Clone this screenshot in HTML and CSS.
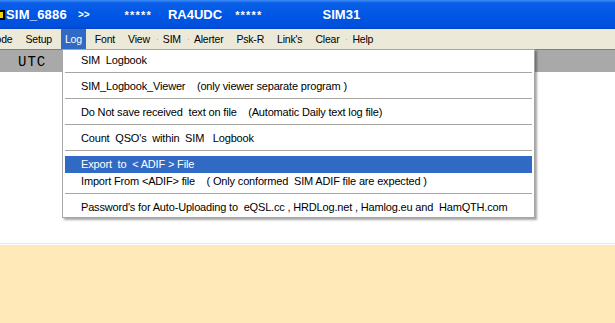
FILE: index.html
```html
<!DOCTYPE html>
<html lang="en">
<head>
    <meta charset="UTF-8">
    <title>SIM_6886</title>
    <link rel="stylesheet" href="styles.css">
</head>
<body>
    <div class="window">
        <div class="titlebar">
            <svg class="app-icon" width="5" height="10" viewBox="0 0 5 10">
                <rect x="0" y="0" width="5" height="10" fill="#000"/>
                <rect x="0" y="2" width="3" height="6" fill="#f2d200"/>
            </svg>
            <span class="title-name">SIM_6886</span>
            <span class="title-arrows">&gt;&gt;</span>
            <span class="title-stars first">*****</span>
            <span class="title-call">RA4UDC</span>
            <span class="title-stars second">*****</span>
            <span class="title-ver">SIM31</span>
        </div>

        <div class="menubar">
            <span class="menu-item first">Mode</span>
            <span class="menu-item">Setup</span>
            <span class="menu-item open">Log</span>
            <span class="menu-item">Font</span>
            <span class="menu-item dot-after">View</span>
            <span class="menu-item dot-after">SIM</span>
            <span class="menu-item">Alerter</span>
            <span class="menu-item">Psk-R</span>
            <span class="menu-item">Link's</span>
            <span class="menu-item dot-after">Clear</span>
            <span class="menu-item">Help</span>
        </div>

        <div class="utc-strip">
            <span class="utc">UTC</span>
        </div>

        <div class="workspace"></div>
        <div class="bottom-pane"></div>

        <!-- open Log menu -->
        <div class="popup">
            <div class="popup-item">SIM  Logbook</div>
            <div class="popup-sep"></div>
            <div class="popup-item">SIM_Logbook_Viewer    (only viewer separate program )</div>
            <div class="popup-sep"></div>
            <div class="popup-item">Do Not save received  text on file    (Automatic Daily text log file)</div>
            <div class="popup-sep"></div>
            <div class="popup-item">Count  QSO's  within  SIM   Logbook</div>
            <div class="popup-sep"></div>
            <div class="popup-item active">Export  to  &lt; ADIF &gt; File</div>
            <div class="popup-item">Import From &lt;ADIF&gt; file    ( Only conformed  SIM ADIF file are expected )</div>
            <div class="popup-sep"></div>
            <div class="popup-item">Password's for Auto-Uploading to  eQSL.cc , HRDLog.net , Hamlog.eu and  HamQTH.com</div>
        </div>
    </div>
</body>
</html>
```

FILE: styles.css
```css
body {
    margin: 0;
    font-family: "Liberation Sans", Arial, sans-serif;
    background: #ffffff;
    overflow: hidden;
}

.window {
    position: relative;
    width: 615px;
    height: 323px;
    display: flex;
    flex-direction: column;
}

/* Title bar */
.titlebar {
    height: 29px;
    display: flex;
    align-items: center;
    color: #ffffff;
    font-weight: bold;
    font-size: 13px;
    background: linear-gradient(to bottom, #3d8df5 0px, #0a5ee8 3px, #0057e5 50%, #0050dc 90%, #0046c8 100%);
}

.app-icon {
    flex: none;
    margin-top: 1px;
}

.title-name {
    margin-left: 1px;
    letter-spacing: 0.2px;
}

.title-arrows {
    margin-left: 11px;
    font-size: 10px;
}

.title-stars {
    font-size: 11px;
    letter-spacing: 1.2px;
}

.title-stars.first {
    margin-left: 35px;
}

.title-stars.second {
    margin-left: 13px;
}

.title-call {
    margin-left: 16px;
}

.title-ver {
    margin-left: 60px;
}

/* Menu bar */
.menubar {
    height: 20px;
    display: flex;
    align-items: stretch;
    background: #ece9d8;
    font-size: 10.5px;
    letter-spacing: -0.2px;
    color: #000000;
}

.menu-item {
    display: flex;
    align-items: center;
    padding: 0 4px;
    margin-right: 5px;
    position: relative;
}

.menu-item.first {
    margin-left: -17px;
}

.menu-item.open {
    background: #316ac5;
    color: #ffffff;
}

.menu-item.dot-after::after {
    content: "";
    position: absolute;
    right: -4px;
    top: 10px;
    width: 1px;
    height: 1px;
    background: #b8b4a4;
}

/* UTC strip */
.utc-strip {
    height: 22px;
    background: #a9a9a9;
    border-top: 1px solid #7f7f7f;
    display: flex;
    align-items: center;
}

.utc {
    font-family: "Liberation Mono", "Courier New", monospace;
    font-size: 14px;
    letter-spacing: 1px;
    margin-left: 18px;
    margin-top: 1px;
    color: #000000;
}

.workspace {
    height: 171px;
    background: #ffffff;
    border-bottom: 1px solid #ebe7d6;
}

.bottom-pane {
    flex: 1;
    margin-top: 1px;
    background: #ffe9b8;
}

/* Dropdown menu */
.popup {
    position: absolute;
    left: 62px;
    top: 49px;
    width: 467px;
    padding: 2px 2px 1px 2px;
    background: #ffffff;
    border: 1px solid #a7a6a0;
    box-shadow: 2px 2px 2px rgba(0, 0, 0, 0.35);
    font-size: 11px;
    letter-spacing: -0.17px;
    color: #000000;
}

.popup-item {
    height: 17px;
    line-height: 17px;
    padding-left: 16px;
    white-space: pre;
}

.popup-item.active {
    background: #316ac5;
    color: #ffffff;
}

.popup-sep {
    height: 9px;
    box-sizing: border-box;
    padding-top: 3px;
}

.popup-sep::before {
    content: "";
    display: block;
    height: 1px;
    background: #a7a6a0;
}
```
